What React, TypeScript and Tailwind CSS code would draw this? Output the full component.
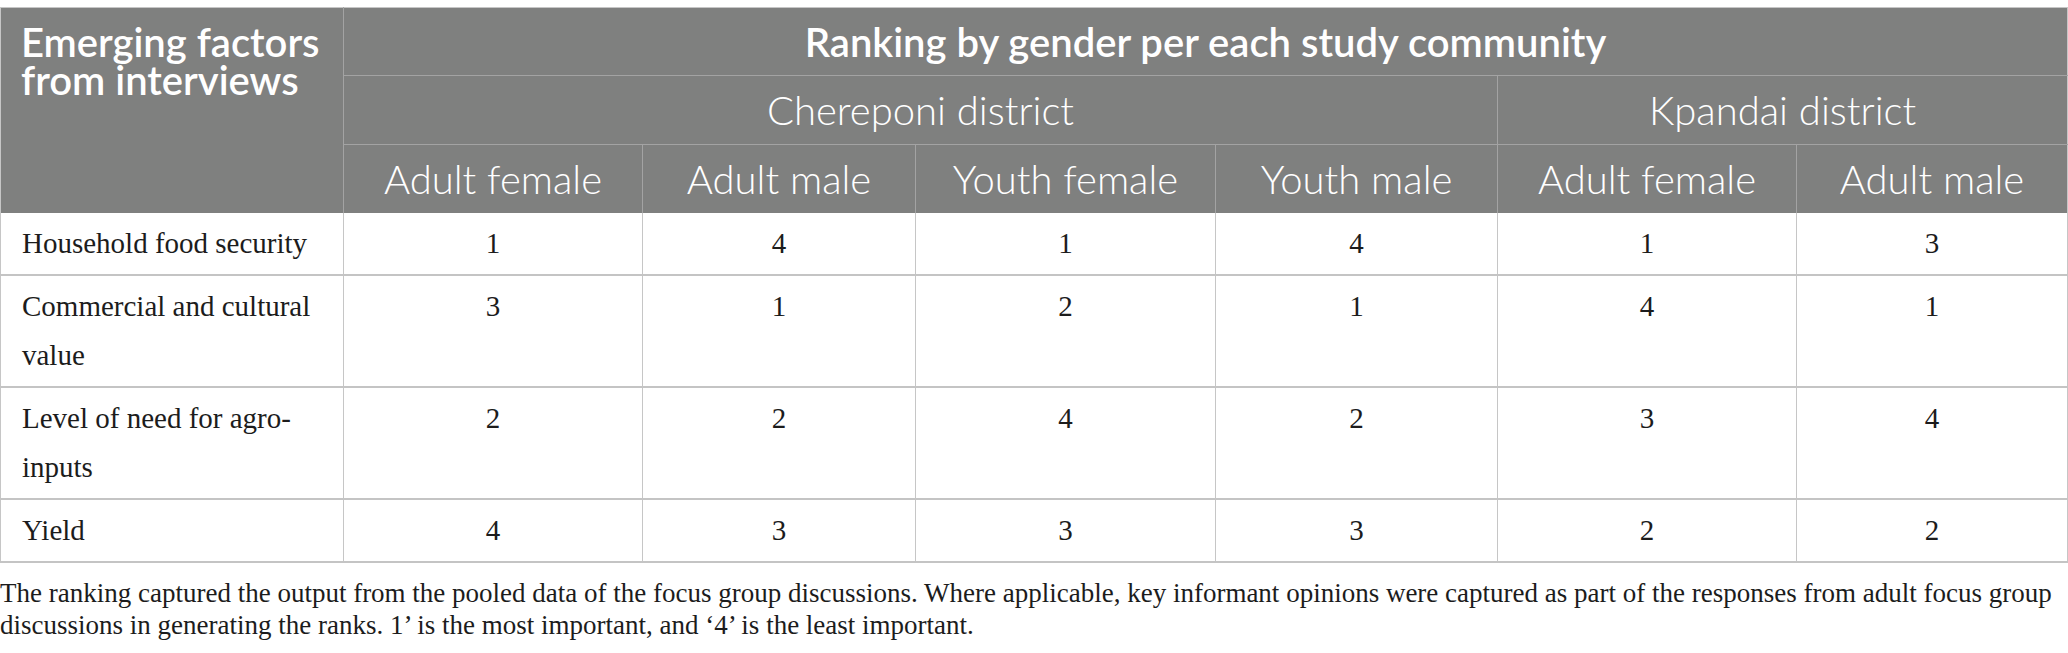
const rows: { label: string[]; ranks: number[] }[] = [
  { label: ["Household food security"], ranks: [1, 4, 1, 4, 1, 3] },
  { label: ["Commercial and cultural", "value"], ranks: [3, 1, 2, 1, 4, 1] },
  { label: ["Level of need for agro-", "inputs"], ranks: [2, 2, 4, 2, 3, 4] },
  { label: ["Yield"], ranks: [4, 3, 3, 3, 2, 2] },
];

const groups = ["Adult female", "Adult male", "Youth female", "Youth male", "Adult female", "Adult male"];

export default function App() {
  return (
    <div className="bg-white w-[2068px] h-[653px] pt-[7px] overflow-hidden">
      <table className="table-fixed border-collapse w-[2067px] border border-[#c6c6c6]">
        <colgroup>
          <col className="w-[343px]" />
          <col className="w-[299px]" />
          <col className="w-[273px]" />
          <col className="w-[300px]" />
          <col className="w-[282px]" />
          <col className="w-[299px]" />
          <col className="w-[271px]" />
        </colgroup>
        <thead className="bg-[#7f807f] text-white font-['Lato',sans-serif]">
          <tr className="h-[68px]">
            <th
              rowSpan={3}
              className="align-top text-left font-semibold text-[40px] leading-[38px] pl-[20px] pt-[15px] border-r border-[#a3a3a3]"
            >
              Emerging factors from interviews
            </th>
            <th colSpan={6} className="font-semibold text-[40px] leading-[44px] border-b border-[#a3a3a3]">
              Ranking by gender per each study community
            </th>
          </tr>
          <tr className="h-[69px]">
            <th colSpan={4} className="font-light text-[40px] leading-[44px] border-b border-r border-[#a3a3a3]">
              Chereponi district
            </th>
            <th colSpan={2} className="font-light text-[40px] leading-[44px] border-b border-[#a3a3a3]">
              Kpandai district
            </th>
          </tr>
          <tr className="h-[68px]">
            {groups.map((g, i) => (
              <th
                key={i}
                className="font-light text-[40px] leading-[44px] border-r border-[#a3a3a3] last:border-r-0"
              >
                {g}
              </th>
            ))}
          </tr>
        </thead>
        <tbody className="font-['Liberation_Serif',serif] text-[29px] text-[#1c1c1c]">
          {rows.map((r, i) => (
            <tr key={i} className="border-b-2 border-[#c4c4c4]">
              <td className="align-top pl-[21px] pr-2 py-[6px] leading-[49px] border-r border-[#c6c6c6]">
                {r.label.map((l, j) => (
                  <div key={j}>{l}</div>
                ))}
              </td>
              {r.ranks.map((n, j) => (
                <td
                  key={j}
                  className="align-top text-center py-[6px] leading-[49px] border-r border-[#c6c6c6] last:border-r-0"
                >
                  {n}
                </td>
              ))}
            </tr>
          ))}
        </tbody>
      </table>
      <div className="font-['Liberation_Serif',serif] text-[27px] leading-[32px] text-[#1c1c1c] pt-[14px] whitespace-nowrap">
        <div>
          The ranking captured the output from the pooled data of the focus group discussions. Where applicable, key
          informant opinions were captured as part of the responses from adult focus group
        </div>
        <div>discussions in generating the ranks. 1’ is the most important, and ‘4’ is the least important.</div>
      </div>
    </div>
  );
}
